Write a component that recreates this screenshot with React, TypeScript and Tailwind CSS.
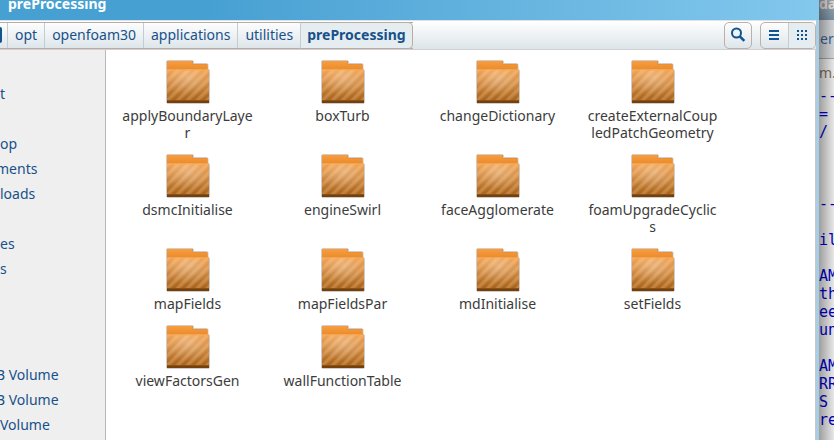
import { useState } from 'react'
import { clsx } from 'clsx'

const crumbs = ['opt', 'openfoam30', 'applications', 'utilities', 'preProcessing']

const folders = [
  'applyBoundaryLaye\nr',
  'boxTurb',
  'changeDictionary',
  'createExternalCoup\nledPatchGeometry',
  'dsmcInitialise',
  'engineSwirl',
  'faceAgglomerate',
  'foamUpgradeCyclic\ns',
  'mapFields',
  'mapFieldsPar',
  'mdInitialise',
  'setFields',
  'viewFactorsGen',
  'wallFunctionTable',
]

// groups of the places list; `cut` marks labels whose first letter runs off the edge
const places = [
  { gap: 'mt-[31px]', items: [{ label: 't', cut: false }] },
  {
    gap: 'mt-[25px]',
    items: [
      { label: 'op', cut: false },
      { label: 'ments', cut: true },
      { label: 'loads', cut: false },
    ],
  },
  {
    gap: 'mt-[25px]',
    items: [
      { label: 'es', cut: false },
      { label: 's', cut: false },
    ],
  },
  {
    gap: 'mt-[81px]',
    items: [
      { label: 'B Volume', cut: true },
      { label: 'B Volume', cut: true },
      { label: 'Volume', cut: false },
    ],
  },
]

const editorText = `--
=
/



--

il

AM
th
ee
un

AM
RR
S
re`

function FolderIcon() {
  return (
    <svg width={44} height={44} viewBox="0 0 44 44" aria-hidden className="block shrink-0">
      <path
        d="M.5 42.500V1.500L1.500.5H26.500L27.500 1.500V3.500H41L42 4.500V9L43.500 10.500V42.500L42.500 43.500H1.500z"
        fill="#e08a34"
        stroke="#cfcdd0"
      />
      <path d="M1 10V1.500L1.500 1H26.500V4.500H41.500V10z" fill="url(#folder-back)" />
      <path d="M1 9.500h42v31H1z" fill="url(#folder-front)" />
      <path d="M1 9.500h42v31H1z" fill="url(#folder-stripes)" />
      <path d="M1 9.500h42v31H1z" fill="url(#folder-glow)" />
      <path d="M1 10h42" stroke="#f8ab58" />
      <path d="M1 40h42v3H1z" fill="#74400c" />
      <path d="M1 40.500h42" stroke="#8d5114" />
    </svg>
  )
}

function FolderDefs() {
  return (
    <svg width={0} height={0} aria-hidden className="absolute">
      <defs>
        <linearGradient id="folder-back" x1="0" y1="0" x2="0" y2="1">
          <stop offset="0" stopColor="#fa9d3f" />
          <stop offset="1" stopColor="#e88b2c" />
        </linearGradient>
        <linearGradient id="folder-front" x1="0" y1="0" x2="0" y2="1">
          <stop offset="0" stopColor="#f19c47" />
          <stop offset="0.5" stopColor="#cd8439" />
          <stop offset="1" stopColor="#a9631a" />
        </linearGradient>
        <radialGradient id="folder-glow" cx="0.5" cy="0.25" r="0.6">
          <stop offset="0" stopColor="#fff" stopOpacity="0.28" />
          <stop offset="1" stopColor="#fff" stopOpacity="0" />
        </radialGradient>
        <pattern id="folder-stripes" width="7" height="7" patternUnits="userSpaceOnUse" patternTransform="rotate(45)">
          <rect width="3.500" height="7" fill="#ffe2c0" fillOpacity="0.22" />
        </pattern>
      </defs>
    </svg>
  )
}

function SearchIcon() {
  return (
    <svg width={16} height={16} viewBox="0 0 16 16" aria-hidden fill="none" stroke="#0f5391">
      <circle cx="6.500" cy="6" r="4.500" strokeWidth="2" />
      <path d="M9.800 9.300L14.300 13.800" strokeWidth="2.600" />
    </svg>
  )
}

function ListIcon() {
  return (
    <svg width={10} height={10} viewBox="0 0 10 10" aria-hidden fill="#0f5391">
      <path d="M0 0h10v2H0zM0 4h10v2H0zM0 8h10v2H0z" />
    </svg>
  )
}

function GridIcon() {
  return (
    <svg width={10} height={10} viewBox="0 0 10 10" aria-hidden fill="#0f5391">
      <path d="M0 0h2v2H0zM4 0h2v2H4zM8 0h2v2H8zM0 4h2v2H0zM4 4h2v2H4zM8 4h2v2H8zM0 8h2v2H0zM4 8h2v2H4zM8 8h2v2H8z" />
    </svg>
  )
}

function Toolbar() {
  const [view, setView] = useState('grid')

  return (
    <div className="flex h-[30px] shrink-0 items-center justify-between border-t border-b border-t-[#dfe1e6] border-b-[#cfd0d4] bg-linear-to-b from-white to-[#dde5e9]">
      <nav aria-label="Path" className="flex h-[27px] items-stretch border-y border-[#b8aca4]">
        <button type="button" aria-label="Computer" className="flex w-2 items-center border-r border-[#c3ccd3]">
          <span className="h-4 w-[2px] rounded-r-xs bg-[#0f5391]" />
        </button>
        {crumbs.map((crumb, index) => {
          const last = index === crumbs.length - 1

          return (
            <button
              key={crumb}
              type="button"
              className={clsx(
                'leading-6 text-[#17518b]',
                last
                  ? '-my-px rounded-r-[5px] border border-l-[#c3ccd3] border-[#b8aca4] bg-[#e6edf1] px-[6px] font-bold'
                  : 'px-[7px]',
                index < crumbs.length - 2 && 'border-r border-[#c3ccd3]',
              )}
            >
              {crumb}
            </button>
          )
        })}
      </nav>
      <div className="flex gap-2">
        <button
          type="button"
          aria-label="Search"
          className="flex h-[27px] w-7 items-center justify-center rounded-[5px] border border-[#bcb0a8]"
        >
          <SearchIcon />
        </button>
        <div className="flex h-[27px] w-14 overflow-hidden rounded-[5px] border border-[#bcb0a8]">
          <button
            type="button"
            aria-label="List view"
            aria-pressed={view === 'list'}
            onClick={() => setView('list')}
            className="flex flex-1 items-center justify-center"
          >
            <ListIcon />
          </button>
          <button
            type="button"
            aria-label="Icon view"
            aria-pressed={view === 'grid'}
            onClick={() => setView('grid')}
            className="flex flex-1 items-center justify-center border-l border-[#c3ccd3] bg-[#e6edf1]"
          >
            <GridIcon />
          </button>
        </div>
      </div>
    </div>
  )
}

function Sidebar() {
  return (
    <aside className="w-[106px] shrink-0 overflow-hidden border-r border-[#b9b9b9] bg-[#efefef] text-[#17518b]">
      {places.map((group) => (
        <ul key={group.gap + group.items[0].label} className={group.gap}>
          {group.items.map((item, index) => (
            <li key={index} className={clsx('h-[25px] leading-[25px] whitespace-nowrap', item.cut && '-ml-1')}>
              <a href="#">{item.label}</a>
            </li>
          ))}
        </ul>
      ))}
    </aside>
  )
}

export default function App() {
  return (
    <div className="flex h-screen overflow-hidden bg-white font-['Noto_Sans',sans-serif] text-[14px]">
      <FolderDefs />
      <div className="flex min-w-0 flex-1 flex-col">
        <header className="flex h-5 shrink-0 items-start bg-linear-to-r from-[#46a0d2] from-25% to-[#83c8ed] pl-2">
          <h1 className="-mt-[6px] leading-5 font-bold text-white">preProcessing</h1>
        </header>
        <div className="flex min-h-0 flex-1 flex-col border-r-[3px] border-[#a9cde3]">
          <Toolbar />
          <div className="flex min-h-0 flex-1 border-r border-[#c9c9c9]">
            <Sidebar />
            <main className="min-w-0 flex-1 overflow-hidden bg-white pt-[10px] pl-1">
              <ul className="grid grid-cols-[repeat(auto-fill,155px)] gap-y-[13px]">
                {folders.map((name) => (
                  <li key={name} className="flex flex-col items-center gap-[3px]">
                    <FolderIcon />
                    <span className="text-center leading-[17px] whitespace-pre text-[#3c3c3c]">{name}</span>
                  </li>
                ))}
              </ul>
            </main>
          </div>
        </div>
      </div>
      <div className="relative w-[15px] shrink-0 overflow-hidden bg-[#f4f4f4]">
        <div className="flex h-5 items-start bg-linear-to-b from-[#a3b3bf] to-[#7f97a9] font-bold text-[#f4e6de]">
          <p className="-mt-[6px] leading-5">da</p>
        </div>
        <p className="h-[39px] border-b border-[#aaa] bg-[#dde0e3] pl-px leading-[38px] text-[#3a6a9c]">er</p>
        <p className="h-7 leading-7 text-[#8a7260]">m.</p>
        <pre className="font-['DejaVu_Sans_Mono',monospace] text-[15px] leading-[18px] text-[#0000d0]">{editorText}</pre>
        {/* shadow the front window throws on the editor */}
        <div className="pointer-events-none absolute inset-0 bg-linear-to-r from-black/35 to-black/5" />
      </div>
    </div>
  )
}
